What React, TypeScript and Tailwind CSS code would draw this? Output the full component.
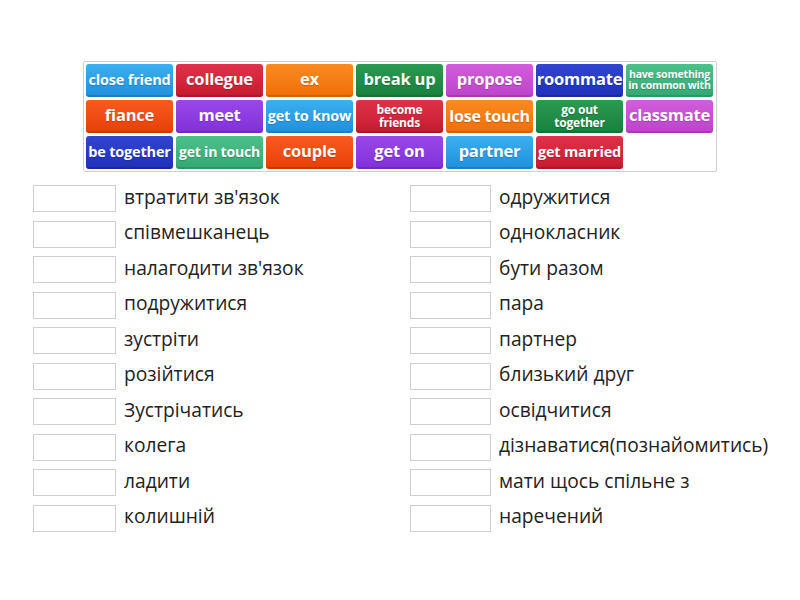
import React from "react";

type Tile = { t: string; c: string; s: string };

const tiles: Tile[] = [
  { t: "close friend", c: "from-[#3bb0f0] to-[#1f8fdb]", s: "text-[14.5px]" },
  { t: "collegue", c: "from-[#e0324a] to-[#c41a30]", s: "text-[16.5px]" },
  { t: "ex", c: "from-[#fb8a20] to-[#f06e05]", s: "text-[16.5px]" },
  { t: "break up", c: "from-[#2a9a52] to-[#17803d]", s: "text-[16.5px]" },
  { t: "propose", c: "from-[#d25ddc] to-[#bb44c8]", s: "text-[16.5px]" },
  { t: "roommate", c: "from-[#3145d0] to-[#1f2fb8]", s: "text-[16.5px]" },
  { t: "have something in common with", c: "from-[#4cc08b] to-[#34a873]", s: "text-[10.5px] leading-[11px]" },
  { t: "fiance", c: "from-[#f95a1e] to-[#e63f05]", s: "text-[16.5px]" },
  { t: "meet", c: "from-[#9a47ea] to-[#8030d8]", s: "text-[16.5px]" },
  { t: "get to know", c: "from-[#3bb0f0] to-[#1f8fdb]", s: "text-[14.5px]" },
  { t: "become friends", c: "from-[#e0324a] to-[#c41a30]", s: "text-[12px] leading-[13px]" },
  { t: "lose touch", c: "from-[#fb8a20] to-[#f06e05]", s: "text-[16px]" },
  { t: "go out together", c: "from-[#2a9a52] to-[#17803d]", s: "text-[12px] leading-[13px]" },
  { t: "classmate", c: "from-[#d25ddc] to-[#bb44c8]", s: "text-[16.5px]" },
  { t: "be together", c: "from-[#3145d0] to-[#1f2fb8]", s: "text-[14.5px]" },
  { t: "get in touch", c: "from-[#4cc08b] to-[#34a873]", s: "text-[14px]" },
  { t: "couple", c: "from-[#f95a1e] to-[#e63f05]", s: "text-[16.5px]" },
  { t: "get on", c: "from-[#9a47ea] to-[#8030d8]", s: "text-[16.5px]" },
  { t: "partner", c: "from-[#3bb0f0] to-[#1f8fdb]", s: "text-[16.5px]" },
  { t: "get married", c: "from-[#e0324a] to-[#c41a30]", s: "text-[14.5px]" },
];

const left = [
  "втратити зв'язок",
  "співмешканець",
  "налагодити зв'язок",
  "подружитися",
  "зустріти",
  "розійтися",
  "Зустрічатись",
  "колега",
  "ладити",
  "колишній",
];

const right = [
  "одружитися",
  "однокласник",
  "бути разом",
  "пара",
  "партнер",
  "близький друг",
  "освідчитися",
  "дізнаватися(познайомитись)",
  "мати щось спільне з",
  "наречений",
];

function Column({ items, boxW }: { items: string[]; boxW: string }) {
  return (
    <div className="flex flex-col gap-[8.5px]">
      {items.map((it) => (
        <div key={it} className="flex items-center h-[27px]">
          <div className={`${boxW} h-[27px] border border-[#cfcfcf] bg-white shrink-0`} />
          <div className="ml-[8px] text-[19.2px] text-[#222] leading-none whitespace-nowrap -mt-[4px]">{it}</div>
        </div>
      ))}
    </div>
  );
}

export default function App() {
  return (
    <div
      className="w-[800px] h-[600px] bg-white relative overflow-hidden"
      style={{ fontFamily: '"Open Sans", "Noto Sans", sans-serif' }}
    >
      <div className="pt-[61px] pl-[83px]">
        <div className="w-[634px] h-[111px] border border-[#cfcfcf] rounded-[2px] p-[2px] grid grid-cols-[repeat(7,87px)] grid-rows-[repeat(3,33px)] gap-x-[3px] gap-y-[3px] bg-white">
          {tiles.map((tile) => (
            <div
              key={tile.t}
              className={`bg-linear-to-b ${tile.c} rounded-[3px] flex items-center justify-center text-center text-white font-bold ${tile.s} [text-shadow:0_1px_1px_rgba(0,0,0,0.2)] shadow-[inset_0_-2px_0_rgba(0,0,0,0.12)] px-[1px] pb-[2px] tracking-[-0.2px]`}
            >
              <span>{tile.t}</span>
            </div>
          ))}
        </div>
      </div>
      <div className="flex pt-[13px]">
        <div className="pl-[33px] w-[410px]">
          <Column items={left} boxW="w-[83px]" />
        </div>
        <div>
          <Column items={right} boxW="w-[81px]" />
        </div>
      </div>
    </div>
  );
}
